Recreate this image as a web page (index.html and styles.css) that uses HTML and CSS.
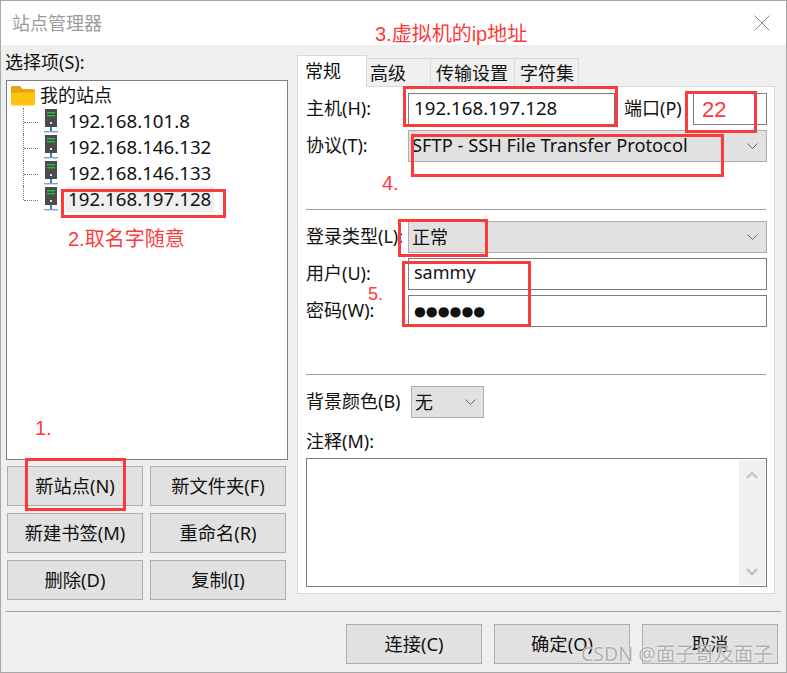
FILE: index.html
```html
<!DOCTYPE html>
<html lang="zh-CN">
<head>
<meta charset="utf-8">
<title>站点管理器</title>
<link rel="stylesheet" href="styles.css">
</head>
<body>
<div class="stage">
  <div class="dialog">
    <header class="titlebar">
      <span class="title">站点管理器</span>
      <svg class="close" width="16" height="16" viewBox="0 0 16 16"><path d="M0.5 0.5L15.5 15.5M15.5 0.5L0.5 15.5" stroke="#8c8c8c" stroke-width="1" fill="none"/></svg>
    </header>
    <div class="main">
      <section class="left">
        <div class="left-label">选择项(S):</div>
        <div class="tree">
          <div class="tree-root">
            <svg class="folder" width="24" height="21" viewBox="0 0 24 21"><path d="M0 2.5Q0 1 1.5 1H9L11.5 4H22.5Q24 4 24 5.5V8H0Z" fill="#e3a80f"/><path d="M0 8.5L8 7.5H24V19Q24 20.5 22.5 20.5H1.5Q0 20.5 0 19Z" fill="#ffc20e"/></svg>
            <span>我的站点</span>
          </div>
          <div class="tree-row">
            <span class="branch"></span>
            <svg class="server" width="14" height="24" viewBox="0 0 14 24"><rect x="1" y="0" width="12" height="18" fill="#4b4b4b"/><rect x="3" y="3" width="8" height="1.4" fill="#25c33a"/><rect x="3" y="6" width="8" height="1.4" fill="#25c33a"/><rect x="6" y="13" width="2" height="2" fill="#e8e8e8"/><rect x="6" y="18" width="2" height="4" fill="#2f7fd0"/><rect x="0" y="22" width="14" height="1.4" fill="#8aa0b5"/></svg>
            <span class="host">192.168.101.8</span>
          </div>
          <div class="tree-row">
            <span class="branch"></span>
            <svg class="server" width="14" height="24" viewBox="0 0 14 24"><rect x="1" y="0" width="12" height="18" fill="#4b4b4b"/><rect x="3" y="3" width="8" height="1.4" fill="#25c33a"/><rect x="3" y="6" width="8" height="1.4" fill="#25c33a"/><rect x="6" y="13" width="2" height="2" fill="#e8e8e8"/><rect x="6" y="18" width="2" height="4" fill="#2f7fd0"/><rect x="0" y="22" width="14" height="1.4" fill="#8aa0b5"/></svg>
            <span class="host">192.168.146.132</span>
          </div>
          <div class="tree-row">
            <span class="branch"></span>
            <svg class="server" width="14" height="24" viewBox="0 0 14 24"><rect x="1" y="0" width="12" height="18" fill="#4b4b4b"/><rect x="3" y="3" width="8" height="1.4" fill="#25c33a"/><rect x="3" y="6" width="8" height="1.4" fill="#25c33a"/><rect x="6" y="13" width="2" height="2" fill="#e8e8e8"/><rect x="6" y="18" width="2" height="4" fill="#2f7fd0"/><rect x="0" y="22" width="14" height="1.4" fill="#8aa0b5"/></svg>
            <span class="host">192.168.146.133</span>
          </div>
          <div class="tree-row">
            <span class="branch branch-last"></span>
            <svg class="server" width="14" height="24" viewBox="0 0 14 24"><rect x="1" y="0" width="12" height="18" fill="#4b4b4b"/><rect x="3" y="3" width="8" height="1.4" fill="#25c33a"/><rect x="3" y="6" width="8" height="1.4" fill="#25c33a"/><rect x="6" y="13" width="2" height="2" fill="#e8e8e8"/><rect x="6" y="18" width="2" height="4" fill="#2f7fd0"/><rect x="0" y="22" width="14" height="1.4" fill="#8aa0b5"/></svg>
            <span class="host host-selected">192.168.197.128</span>
          </div>
        </div>
        <div class="site-buttons">
          <div class="btn">新站点(N)</div>
          <div class="btn">新文件夹(F)</div>
          <div class="btn">新建书签(M)</div>
          <div class="btn">重命名(R)</div>
          <div class="btn">删除(D)</div>
          <div class="btn">复制(I)</div>
        </div>
      </section>
      <section class="right">
        <div class="tabs">
          <div class="tab tab-active">常规</div>
          <div class="tab tab-adv">高级</div>
          <div class="tab tab-w84">传输设置</div>
          <div class="tab tab-w64">字符集</div>
        </div>
        <div class="panel">
          <div class="group">
            <div class="row">
              <label class="lbl">主机(H):</label>
              <div class="input input-host">192.168.197.128</div>
              <label class="lbl-port">端口(P)</label>
              <div class="input input-port"></div>
            </div>
            <div class="row">
              <label class="lbl">协议(T):</label>
              <div class="select select-wide">
                <span class="proto">SFTP - SSH File Transfer Protocol</span>
                <svg class="chev" width="11" height="6" viewBox="0 0 11 6"><path d="M0.5 0.5L5.5 5.5L10.5 0.5" stroke="#666" fill="none"/></svg>
              </div>
            </div>
          </div>
          <hr class="rule rule-first">
          <div class="group">
            <div class="row">
              <label class="lbl">登录类型(L):</label>
              <div class="select select-wide">
                <span>正常</span>
                <svg class="chev" width="11" height="6" viewBox="0 0 11 6"><path d="M0.5 0.5L5.5 5.5L10.5 0.5" stroke="#666" fill="none"/></svg>
              </div>
            </div>
            <div class="row">
              <label class="lbl">用户(U):</label>
              <div class="input input-wide user">sammy</div>
            </div>
            <div class="row">
              <label class="lbl">密码(W):</label>
              <div class="input input-wide dots">●●●●●●</div>
            </div>
          </div>
          <hr class="rule">
          <div class="row row-color">
            <label class="lbl lbl-color">背景颜色(B)</label>
            <div class="select select-small">
              <span>无</span>
              <svg class="chev" width="11" height="6" viewBox="0 0 11 6"><path d="M0.5 0.5L5.5 5.5L10.5 0.5" stroke="#666" fill="none"/></svg>
            </div>
          </div>
          <div class="note-label">注释(M):</div>
          <div class="note">
            <div class="scrollbar">
              <svg width="12" height="8" viewBox="0 0 12 8"><path d="M1 7L6 2L11 7" stroke="#c4c4c4" stroke-width="2.4" fill="none"/></svg>
              <svg width="12" height="8" viewBox="0 0 12 8"><path d="M1 1L6 6L11 1" stroke="#c4c4c4" stroke-width="2.4" fill="none"/></svg>
            </div>
          </div>
        </div>
      </section>
    </div>
    <hr class="footer-rule">
    <footer class="footer">
      <div class="btn">连接(C)</div>
      <div class="btn">确定(O)</div>
      <div class="btn">取消</div>
    </footer>
  </div>

  <div class="mark box-name"></div>
  <div class="mark box-host"></div>
  <div class="mark box-port"></div>
  <div class="mark box-proto"></div>
  <div class="mark box-type"></div>
  <div class="mark box-user"></div>
  <div class="mark box-new"></div>
  <div class="note-red n1">1.</div>
  <div class="note-red n2">2.取名字随意</div>
  <div class="note-red n3">3.虚拟机的ip地址</div>
  <div class="note-red n4">4.</div>
  <div class="note-red n5">5.</div>
  <div class="note-red n22">22</div>
  <div class="watermark">CSDN @面子哥及面子</div>
</div>
</body>
</html>
```

FILE: styles.css
```css
* { box-sizing: border-box; }
html, body { margin: 0; padding: 0; background: #fff; }
body {
  font-family: "Noto Sans", "Noto Sans CJK SC", sans-serif;
  font-size: 18px;
  color: #111;
}
.stage { position: relative; width: 787px; height: 673px; overflow: hidden; }
.dialog {
  width: 787px;
  height: 673px;
  background: #efefef;
  border: 1px solid #a8a8a8;
}
.titlebar {
  height: 44px;
  background: #fff;
  display: flex;
  align-items: center;
  justify-content: space-between;
  padding: 0 16px 0 11px;
}
.title { color: #9b9b9b; line-height: 24px; }
.main { display: flex; height: 555px; }
.left { width: 282px; margin-left: 5px; }
.left-label { height: 35px; line-height: 34px; margin-left: -1px; }
.tree {
  height: 380px;
  background: #fff;
  border: 1px solid #7c7c7c;
  padding-top: 1px;
}
.tree-root { display: flex; align-items: center; height: 26px; padding-left: 4px; line-height: 26px; }
.folder { margin-right: 5px; }
.tree-row { display: flex; align-items: center; height: 26px; padding-left: 16px; }
.branch {
  position: relative;
  align-self: stretch;
  width: 21px;
  border-left: 1px dotted #777;
}
.branch::after {
  content: "";
  position: absolute;
  left: 0;
  top: 14px;
  width: 14px;
  border-top: 1px dotted #777;
}
.branch-last { align-self: flex-start; height: 14px; }
.server { flex: none; }
.host { margin-left: 7px; padding: 0 3px; font-size: 18.7px; line-height: 25px; height: 26px; }
.host-selected { background: #efefef; }
.site-buttons {
  display: grid;
  grid-template-columns: 136px 136px;
  grid-auto-rows: 40px;
  gap: 7px;
  margin: 6px 0 0 1px;
}
.btn {
  display: flex;
  align-items: center;
  justify-content: center;
  height: 40px;
  background: #e1e1e1;
  border: 1px solid #adadad;
  line-height: 24px;
  font-size: 18.3px;
}
.right { width: 478px; margin-left: 9px; padding-top: 10px; }
.tabs { display: flex; height: 31px; align-items: flex-end; }
.tab {
  height: 28px;
  margin-left: -1px;
  background: #efefef;
  border: 1px solid #d9d9d9;
  border-bottom: 0;
  padding-left: 5px;
  line-height: 29px;
}
.tab-active {
  position: relative;
  z-index: 1;
  width: 70px;
  height: 32px;
  margin: 0 0 -1px 0;
  background: #fff;
  padding-left: 7px;
  line-height: 30px;
}
.tab-adv { width: 65px; padding-left: 3px; }
.tab-w64 { width: 65px; }
.tab-w84 { width: 85px; }
.panel {
  height: 508px;
  background: #fff;
  border: 1px solid #d9d9d9;
  padding: 6px 7px 0 8px;
}
.group { display: flex; flex-direction: column; gap: 5px; }
.row { display: flex; align-items: center; height: 32px; }
.lbl { width: 102px; flex: none; height: 32px; line-height: 30px; white-space: nowrap; }
.lbl-port { width: 69px; margin-left: 9px; flex: none; height: 32px; line-height: 30px; white-space: nowrap; }
.input {
  height: 32px;
  background: #fff;
  border: 1px solid #7c7c7c;
  padding-left: 5px;
  font-size: 18.7px;
  line-height: 27px;
}
.input-host { width: 207px; }
.input-port { width: 74px; }
.input-wide { width: 359px; }
.user { font-size: 18px; }
.dots { font-family: "DejaVu Sans", sans-serif; font-size: 13.6px; line-height: 30px; padding-left: 5px; }
.select {
  display: flex;
  align-items: center;
  justify-content: space-between;
  height: 32px;
  background: #e1e1e1;
  border: 1px solid #adadad;
  padding: 0 8px 0 3px;
  line-height: 28px;
}
.proto { font-size: 18.3px; position: relative; bottom: 1px; }
.select-wide { width: 359px; }
.select-small { width: 73px; padding-left: 3px; padding-right: 7px; }
.lbl-color { width: 105px; }
.chev { flex: none; }
.rule { height: 1px; margin: 47px 0 11px; border: 0; background: #a0a0a0; width: 460px; }
.note-label { margin-top: 12px; height: 28px; line-height: 22px; }
.note {
  display: flex;
  justify-content: flex-end;
  width: 461px;
  height: 129px;
  border: 1px solid #7c7c7c;
  padding: 1px;
}
.scrollbar {
  display: flex;
  flex-direction: column;
  align-items: center;
  justify-content: space-between;
  width: 26px;
  padding: 11px 0 9px;
  background: #f0f0f0;
}
.footer-rule { height: 1px; margin: 11px 5px 0 5px; border: 0; background: #a0a0a0; }
.footer { display: flex; justify-content: flex-end; gap: 12px; margin-top: 12px; padding-right: 8px; }
.footer .btn { width: 136px; }

.mark { position: absolute; border: 3px solid #fb3b3b; }
.box-name { left: 61px; top: 189px; width: 165px; height: 29px; }
.box-host { left: 403px; top: 86px; width: 215px; height: 41px; }
.box-port { left: 685px; top: 91px; width: 72px; height: 42px; }
.box-proto { left: 411px; top: 134px; width: 313px; height: 43px; }
.box-type { left: 398px; top: 219px; width: 90px; height: 38px; }
.box-user { left: 402px; top: 261px; width: 129px; height: 66px; }
.box-new { left: 25px; top: 458px; width: 101px; height: 53px; }
.note-red { position: absolute; color: #fb3b3b; line-height: 24px; white-space: nowrap; font-family: "Liberation Sans", "Noto Sans CJK SC", sans-serif; font-size: 20px; }
.n1 { left: 35px; top: 416px; }
.n2 { left: 68px; top: 227px; }
.n3 { left: 375px; top: 22px; }
.n4 { left: 382px; top: 171px; }
.n5 { left: 368px; top: 282px; font-size: 18px; }
.n22 { left: 702px; top: 98px; font-size: 22px; }
.watermark {
  position: absolute;
  left: 581px;
  top: 642px;
  color: #b0b0b0;
  font-size: 19.5px;
  line-height: 24px;
  white-space: nowrap;
  text-shadow: 0 0 2px #fff;
}
```
